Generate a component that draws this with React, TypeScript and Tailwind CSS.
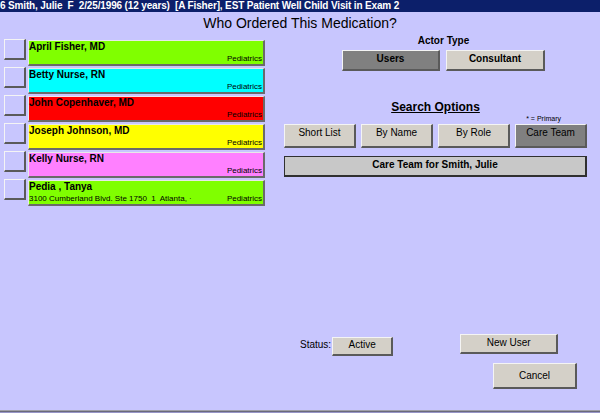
import React from "react";

const rows = [
  { name: "April Fisher, MD", color: "bg-[#80ff00]", sub: "" },
  { name: "Betty Nurse, RN", color: "bg-[#00ffff]", sub: "" },
  { name: "John Copenhaver, MD", color: "bg-[#ff0000]", sub: "" },
  { name: "Joseph Johnson, MD", color: "bg-[#ffff00]", sub: "" },
  { name: "Kelly Nurse, RN", color: "bg-[#ff80ff]", sub: "" },
  { name: "Pedia , Tanya", color: "bg-[#80ff00]", sub: "3100 Cumberland Blvd. Ste 1750  1  Atlanta, \u00b7" },
];

const btn3d =
  "border-t border-l border-b-2 border-r-2 border-t-[#f4f4f4] border-l-[#f4f4f4] border-b-[#5a5a5a] border-r-[#5a5a5a]";

export default function App() {
  return (
    <div
      className="w-[600px] h-[413px] bg-[#c8c6fe] flex flex-col overflow-hidden text-black"
      style={{ fontFamily: '"Liberation Sans", Arial, sans-serif' }}
    >
      <div className="h-[12px] bg-[#0c1f6a] text-white text-[10px] font-bold leading-[12px] tracking-[-0.15px] whitespace-pre overflow-hidden">
        {"6 Smith, Julie  F  2/25/1996 (12 years)  [A Fisher], EST Patient Well Child Visit in Exam 2"}
      </div>
      <div className="h-[22px] text-[14px] leading-[22px] text-center">Who Ordered This Medication?</div>
      <div className="flex flex-1">
        <div className="w-[265px] pl-[4px] pt-[5px] flex flex-col">
          {rows.map((r) => (
            <div key={r.name} className="h-[28px] flex items-start gap-[2px]">
              <div className={`w-[22px] h-[21px] bg-[#c8c6fe] ${btn3d}`} />
              <div
                className={`mt-[1px] w-[237px] h-[26px] ${r.color} border-t border-l border-b-2 border-r-2 border-t-[#e8e8e8] border-l-[#e8e8e8] border-b-[#6a6a6a] border-r-[#6a6a6a] flex flex-col justify-between`}
              >
                <div className="text-[10px] font-bold leading-[12px] whitespace-nowrap">{r.name}</div>
                <div className="flex justify-between text-[8px] leading-[10px] pr-[1px] whitespace-pre">
                  <span>{r.sub}</span>
                  <span>Pediatrics</span>
                </div>
              </div>
            </div>
          ))}
        </div>
        <div className="ml-[19px] w-[303px] flex flex-col">
          <div className="ml-[58px] w-[203px] flex flex-col">
            <div className="mt-[1px] text-[10px] font-bold leading-[12px] text-center">Actor Type</div>
            <div className="mt-[3px] flex gap-[6px]">
              <div className={`w-[98px] h-[21px] bg-[#808080] ${btn3d} text-[10px] font-bold leading-[16px] text-center`}>
                Users
              </div>
              <div className={`w-[99px] h-[21px] bg-[#d4d0c8] ${btn3d} text-[10px] font-bold leading-[16px] text-center`}>
                Consultant
              </div>
            </div>
          </div>
          <div className="mt-[29px] text-[12px] font-bold underline leading-[14px] text-center">Search Options</div>
          <div className="h-[9px] text-[7px] leading-[9px] text-right pr-[26px]">* = Primary</div>
          <div className="mt-[1px] flex gap-[5px]">
            {["Short List", "By Name", "By Role", "Care Team"].map((t, i) => (
              <div
                key={t}
                className={`w-[72px] h-[24px] ${i === 3 ? "bg-[#808080]" : "bg-[#d4d0c8]"} ${btn3d} text-[10px] leading-[14px] text-center pt-[1px]`}
              >
                {t}
              </div>
            ))}
          </div>
          <div className="mt-[8px] h-[21px] bg-[#c8c8c8] border border-[#303030] border-b-2 border-r-2 text-[10px] font-bold leading-[14px] text-center pt-[1px]">
            Care Team for Smith, Julie
          </div>
          <div className="mt-auto flex items-start h-[22px]">
            <div className="ml-[16px] mt-[5px] text-[10px] leading-[12px]">Status:</div>
            <div className={`ml-[1px] mt-[3px] w-[61px] h-[19px] bg-[#d4d0c8] ${btn3d} text-[10px] leading-[14px] text-center`}>
              Active
            </div>
            <div className={`ml-[67px] w-[98px] h-[20px] bg-[#d4d0c8] ${btn3d} text-[10px] leading-[15px] text-center`}>
              New User
            </div>
          </div>
          <div className={`mt-[7px] mb-[21px] ml-[209px] w-[84px] h-[26px] bg-[#d4d0c8] ${btn3d} flex items-center justify-center text-[10px]`}>
            Cancel
          </div>
        </div>
      </div>
      <div className="h-[1px] bg-[#a0a0a8]" />
      <div className="h-[1px] bg-[#6a6a7a]" />
      <div className="h-[1px] bg-[#9896c8]" />
    </div>
  );
}
